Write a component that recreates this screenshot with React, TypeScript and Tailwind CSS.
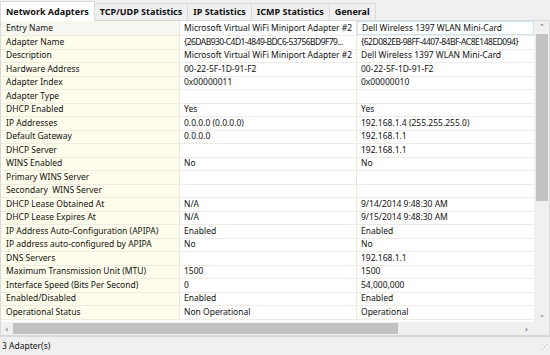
import React from "react";

const rows: [string, string, string][] = [
  ["Entry Name", "Microsoft Virtual WiFi Miniport Adapter #2", "Dell Wireless 1397 WLAN Mini-Card"],
  ["Adapter Name", "{26DAB930-C4D1-4849-BDC6-53756BD9F79...", "{62D082EB-98FF-4407-84BF-AC8E148ED094}"],
  ["Description", "Microsoft Virtual WiFi Miniport Adapter #2", "Dell Wireless 1397 WLAN Mini-Card"],
  ["Hardware Address", "00-22-5F-1D-91-F2", "00-22-5F-1D-91-F2"],
  ["Adapter Index", "0x00000011", "0x00000010"],
  ["Adapter Type", "", ""],
  ["DHCP Enabled", "Yes", "Yes"],
  ["IP Addresses", "0.0.0.0 (0.0.0.0)", "192.168.1.4 (255.255.255.0)"],
  ["Default Gateway", "0.0.0.0", "192.168.1.1"],
  ["DHCP Server", "", "192.168.1.1"],
  ["WINS Enabled", "No", "No"],
  ["Primary WINS Server", "", ""],
  ["Secondary  WINS Server", "", ""],
  ["DHCP Lease Obtained At", "N/A", "9/14/2014 9:48:30 AM"],
  ["DHCP Lease Expires At", "N/A", "9/15/2014 9:48:30 AM"],
  ["IP Address Auto-Configuration (APIPA)", "Enabled", "Enabled"],
  ["IP address auto-configured by APIPA", "No", "No"],
  ["DNS Servers", "", "192.168.1.1"],
  ["Maximum Transmission Unit (MTU)", "1500", "1500"],
  ["Interface Speed (Bits Per Second)", "0", "54,000,000"],
  ["Enabled/Disabled", "Enabled", "Enabled"],
  ["Operational Status", "Non Operational", "Operational"],
];

const tabs = ["TCP/UDP Statistics", "IP Statistics", "ICMP Statistics", "General"];

export default function App() {
  return (
    <div
      className="relative flex h-[355px] w-[550px] flex-col overflow-hidden bg-[#f0f0f0] text-[8.5px] text-[#111]"
      style={{ fontFamily: '"Noto Sans", sans-serif' }}
    >
      {/* tabs */}
      <div className="flex h-[20px] items-end">
        <div className="z-10 -mb-px flex h-[20px] items-center whitespace-nowrap border border-b-0 border-[#d9d9d9] bg-white px-[5px] text-[9px] font-bold">
          Network Adapters
        </div>
        {tabs.map((t) => (
          <div
            key={t}
            className="-ml-px flex h-[17px] items-center whitespace-nowrap border border-b-0 border-[#d9d9d9] bg-[#f0f0f0] px-[5px] text-[9px] font-bold"
          >
            {t}
          </div>
        ))}
      </div>

      {/* panel */}
      <div className="flex h-[316px] flex-col border border-[#d9d9d9] bg-white">
        <div className="flex flex-1 overflow-hidden">
          <div className="flex-1 overflow-hidden">
            {rows.map(([a, b, c], i) => (
              <div
                key={a}
                className={`flex whitespace-pre border-b border-[#f0ece4] ${i === 0 ? "h-[15px]" : "h-[13.5px]"}`}
              >
                <div
                  className={`flex w-[179px] shrink-0 items-center overflow-hidden border-r border-[#ece8dc] pl-[5px] ${
                    i === 0 ? "bg-[#f7f7f2]" : "bg-[#fffdeb]"
                  }`}
                >
                  {a}
                </div>
                <div
                  className={`flex w-[177px] shrink-0 items-center overflow-hidden border-r border-[#ece8dc] pl-[4px] ${
                    i === 1 ? "tracking-[-0.55px]" : ""
                  }`}
                >
                  {b}
                </div>
                <div
                  className={`flex w-[177px] shrink-0 items-center overflow-hidden pl-[4px] ${
                    i === 0 ? "border border-[#cde4f7]" : ""
                  } ${i === 1 ? "tracking-[-0.5px]" : ""}`}
                >
                  {c}
                </div>
              </div>
            ))}
          </div>
          {/* vertical scrollbar */}
          <div className="flex w-[15px] flex-col items-center bg-[#f0f0f0]">
            <div className="flex h-[13px] items-center text-[7px] text-[#606060]">⌃</div>
            <div className="h-[167px] w-[12px] bg-[#c2c2c2]" />
            <div className="flex-1" />
            <div className="flex h-[13px] items-center text-[7px] text-[#606060]">⌄</div>
          </div>
        </div>
        {/* horizontal scrollbar */}
        <div className="flex h-[13px] items-center bg-[#f0f0f0]">
          <div className="flex w-[12px] items-center justify-center text-[9px] text-[#606060]">‹</div>
          <div className="h-[11px] w-[385px] bg-[#c2c2c2]" />
          <div className="flex-1" />
          <div className="flex w-[15px] items-center justify-center text-[9px] text-[#606060]">›</div>
          <div className="w-[15px]" />
        </div>
      </div>

      {/* status bar */}
      <div className="flex flex-1 items-center justify-between border-t border-[#d9d9d9] pl-[2px] pr-[3px]">
        <span>3 Adapter(s)</span>
        <span className="text-[7px] leading-none tracking-[-1px] text-[#a0a0a0]">⋰</span>
      </div>
    </div>
  );
}
